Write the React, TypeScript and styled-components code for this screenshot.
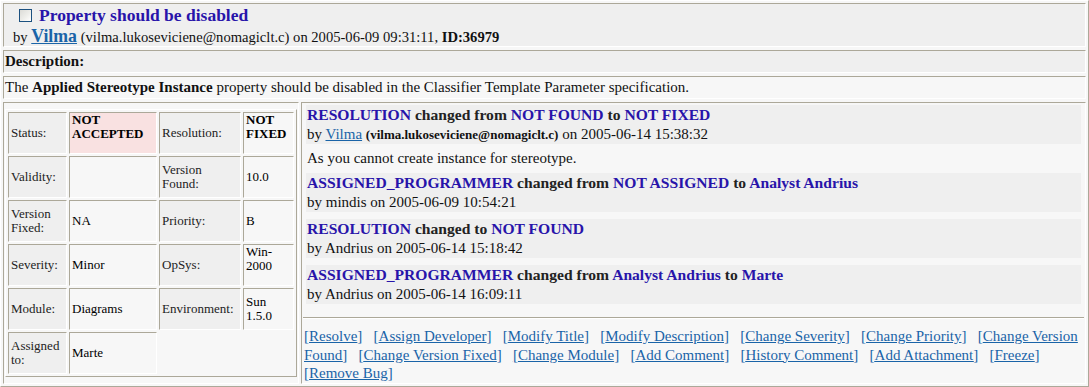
import React from 'react';
import styled, { createGlobalStyle } from 'styled-components';

const DARK = '#aca899';
const BLUE = '#2814aa';
const LINK = '#1a64a8';

const GlobalStyle = createGlobalStyle`
  html, body { margin: 0; padding: 0; background: #fff; }
  body { font-family: "Liberation Serif", "Times New Roman", serif; color: #111; }
`;

const Frame = styled.div`
  box-sizing: border-box;
  width: 1089px;
  height: 387px;
  border: 1px solid;
  border-color: #fff ${DARK} ${DARK} #fff;
  padding: 2px;
  display: flex;
  flex-direction: column;
  gap: 3px;
  background: #f7f7f7;
`;

const Cell = styled.div<{ $bg?: string }>`
  box-sizing: border-box;
  border: 1px solid;
  border-color: ${DARK} #fff #fff ${DARK};
  background: ${p => p.$bg || '#f7f7f7'};
`;

const Header = styled(Cell)`
  height: 44px;
  padding: 1px 9px;
`;

const TitleLine = styled.div`
  display: flex;
  align-items: center;
  gap: 7px;
  padding-left: 6px;
  height: 21px;
`;

const Check = styled.span`
  box-sizing: border-box;
  width: 13px;
  height: 13px;
  border: 1px solid #1c5180;
  background: linear-gradient(135deg, #dcdcd7 0%, #eeeeea 55%, #fff 100%);
`;

const Title = styled.span`
  font-size: 17.5px;
  font-weight: bold;
  color: ${BLUE};
`;

const ByLine = styled.div`
  font-size: 14.6px;
  line-height: 20px;
  white-space: nowrap;
`;

const UserLink = styled.a<{ $big?: boolean }>`
  color: ${LINK};
  text-decoration: underline;
  font-weight: ${p => (p.$big ? 'bold' : 'normal')};
  font-size: ${p => (p.$big ? '17.8px' : '15px')};
`;

const Mail = styled.b`
  font-size: 13px;
`;

const TextRow = styled(Cell)<{ $bold?: boolean }>`
  height: 23px;
  padding: 0 1px;
  font-size: 15px;
  line-height: 21px;
  font-weight: ${p => (p.$bold ? 'bold' : 'normal')};
  white-space: nowrap;
`;

const Main = styled.div`
  flex: 1;
  display: flex;
  gap: 2px;
  min-height: 0;
`;

const LeftCell = styled(Cell)`
  width: 296px;
  padding: 0 1px;
  display: flex;
  align-items: center;
`;

const InfoGrid = styled.div`
  box-sizing: border-box;
  width: 292px;
  border: 1px solid;
  border-color: #fff ${DARK} ${DARK} #fff;
  padding: 2px;
  display: grid;
  grid-template-columns: 59px 88px 82px 51px;
  grid-auto-rows: 42px;
  gap: 2px;
`;

const InfoCell = styled.div<{ $kind: 'label' | 'value' | 'alert'; $top?: boolean; $bold?: boolean }>`
  box-sizing: border-box;
  border: 1px solid;
  border-color: ${DARK} #fff #fff ${DARK};
  padding: 0 2px;
  display: flex;
  align-items: ${p => (p.$top ? 'flex-start' : 'center')};
  font-size: 13px;
  line-height: 14px;
  font-weight: ${p => (p.$bold ? 'bold' : 'normal')};
  color: ${p => (p.$kind === 'label' ? '#222' : '#000')};
  background: ${p => (p.$kind === 'label' ? '#efefef' : p.$kind === 'alert' ? '#f9e1e1' : '#f7f7f7')};
`;

const RightCell = styled(Cell)`
  flex: 1;
  padding: 2px 1px 0;
`;

const History = styled.div`
  display: flex;
  flex-direction: column;
  gap: 7px;
  margin: 0 3px;
`;

const Entry = styled.div`
  background: #efefef;
  padding: 0 1px;
`;

const Change = styled.div`
  font-size: 15.6px;
  line-height: 20px;
  font-weight: bold;
  color: #222;
  white-space: nowrap;
`;

const Val = styled.span`
  color: ${BLUE};
`;

const Who = styled.div`
  font-size: 15px;
  line-height: 19px;
  white-space: nowrap;
`;

const Comment = styled.div`
  font-size: 15px;
  line-height: 15px;
  padding: 0 1px;
`;

const Rule = styled.div`
  margin-top: 13px;
  border-top: 1px solid ${DARK};
  border-bottom: 1px solid #fff;
`;

const Actions = styled.div`
  margin-top: 8px;
  padding-left: 1px;
  font-size: 15px;
  line-height: 18.5px;
`;

const Action = styled.a`
  color: ${LINK};
  text-decoration: underline;
`;

const info: { label: string; value: string; alert?: boolean; bold?: boolean; top?: boolean }[][] = [
  [
    { label: 'Status:', value: 'NOT ACCEPTED', alert: true, bold: true, top: true },
    { label: 'Resolution:', value: 'NOT FIXED', bold: true, top: true },
  ],
  [
    { label: 'Validity:', value: '' },
    { label: 'Version Found:', value: '10.0' },
  ],
  [
    { label: 'Version Fixed:', value: 'NA' },
    { label: 'Priority:', value: 'B' },
  ],
  [
    { label: 'Severity:', value: 'Minor' },
    { label: 'OpSys:', value: 'Win-2000', top: true },
  ],
  [
    { label: 'Module:', value: 'Diagrams' },
    { label: 'Environment:', value: 'Sun 1.5.0' },
  ],
  [{ label: 'Assigned to:', value: 'Marte' }],
];

const actions = [
  'Resolve',
  'Assign Developer',
  'Modify Title',
  'Modify Description',
  'Change Severity',
  'Change Priority',
  'Change Version Found',
  'Change Version Fixed',
  'Change Module',
  'Add Comment',
  'History Comment',
  'Add Attachment',
  'Freeze',
  'Remove Bug',
];

export default function App() {
  return (
    <>
      <GlobalStyle />
      <Frame>
        <Header $bg="#efefef">
          <TitleLine>
            <Check />
            <Title>Property should be disabled</Title>
          </TitleLine>
          <ByLine>
            by <UserLink $big href="#">Vilma</UserLink> (vilma.lukoseviciene@nomagiclt.c) on 2005-06-09 09:31:11,{' '}
            <b>ID:36979</b>
          </ByLine>
        </Header>

        <TextRow $bg="#efefef" $bold>Description:</TextRow>
        <TextRow>
          The <b>Applied Stereotype Instance</b> property should be disabled in the Classifier Template Parameter
          specification.
        </TextRow>

        <Main>
          <LeftCell>
            <InfoGrid>
              {info.map(row =>
                row.map(c => (
                  <React.Fragment key={c.label}>
                    <InfoCell $kind="label">{c.label}</InfoCell>
                    <InfoCell $kind={c.alert ? 'alert' : 'value'} $bold={c.bold} $top={c.top}>
                      {c.value}
                    </InfoCell>
                  </React.Fragment>
                ))
              )}
            </InfoGrid>
          </LeftCell>

          <RightCell>
            <History>
              <Entry>
                <Change>
                  <Val>RESOLUTION</Val> changed from <Val>NOT FOUND</Val> to <Val>NOT FIXED</Val>
                </Change>
                <Who>
                  by <UserLink href="#">Vilma</UserLink> <Mail>(vilma.lukoseviciene@nomagiclt.c)</Mail> on 2005-06-14
                  15:38:32
                </Who>
              </Entry>
              <Comment>As you cannot create instance for stereotype.</Comment>
              <Entry>
                <Change>
                  <Val>ASSIGNED_PROGRAMMER</Val> changed from <Val>NOT ASSIGNED</Val> to <Val>Analyst Andrius</Val>
                </Change>
                <Who>by mindis on 2005-06-09 10:54:21</Who>
              </Entry>
              <Entry>
                <Change>
                  <Val>RESOLUTION</Val> changed to <Val>NOT FOUND</Val>
                </Change>
                <Who>by Andrius on 2005-06-14 15:18:42</Who>
              </Entry>
              <Entry>
                <Change>
                  <Val>ASSIGNED_PROGRAMMER</Val> changed from <Val>Analyst Andrius</Val> to <Val>Marte</Val>
                </Change>
                <Who>by Andrius on 2005-06-14 16:09:11</Who>
              </Entry>
            </History>
            <Rule />
            <Actions>
              {actions.map(a => (
                <React.Fragment key={a}>
                  <Action href="#">[{a}]</Action>
                  {'\u00a0\u00a0 '}
                </React.Fragment>
              ))}
            </Actions>
          </RightCell>
        </Main>
      </Frame>
    </>
  );
}
